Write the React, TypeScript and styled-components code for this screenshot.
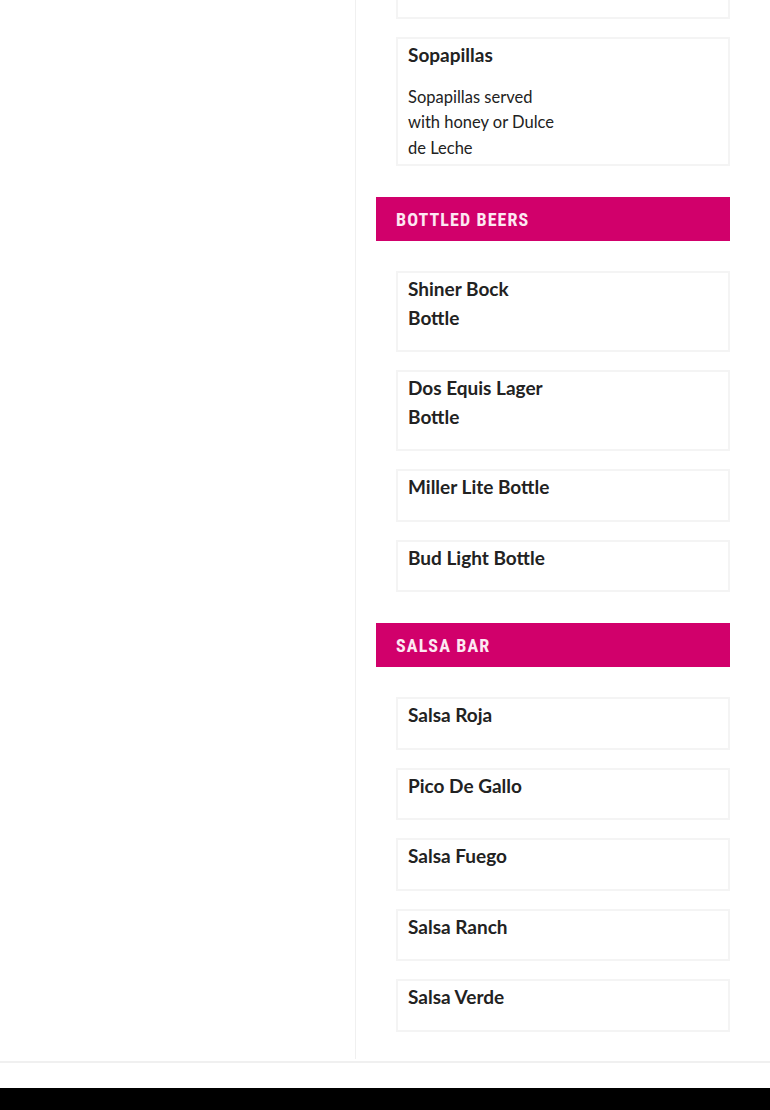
import React from "react";
import styled, { createGlobalStyle } from "styled-components";

const Global = createGlobalStyle`
  html, body { margin: 0; padding: 0; background: #fff; }
  body { font-family: "Source Sans Pro", Lato, "Noto Sans", sans-serif; color: #222; }
`;

const Page = styled.div`
  width: 770px;
  overflow: hidden;
`;

const Main = styled.div`
  display: flex;
  border-bottom: 2px solid #f0f0f0;
`;

const Sidebar = styled.aside`
  width: 355px;
  flex: none;
  border-right: 1px solid #f0f0f0;
  margin-bottom: 2px;
`;

const Content = styled.main`
  flex: 1;
  padding: 0 40px 29px 20px;
`;

const Section = styled.section`
  display: flex;
  flex-direction: column;
`;

const SectionHeader = styled.h2`
  margin: 31px 0 12px;
  height: 44px;
  box-sizing: border-box;
  background: #d1006b;
  color: #fde8f2;
  font-family: "Roboto Condensed", "DejaVu Sans Condensed", Roboto, sans-serif;
  font-stretch: condensed;
  font-weight: 700;
  font-size: 18px;
  letter-spacing: 1.1px;
  text-transform: uppercase;
  padding: 0 20px;
  display: flex;
  align-items: center;
`;

const Card = styled.div<{ $stub?: boolean }>`
  margin: 18px 0 0 20px;
  border: 2px solid #f4f4f4;
  padding: 2px 10px 3px;
  display: grid;
  grid-template-columns: 152px 1fr;
  ${(p) => (p.$stub ? "border-top: none; height: 12px; margin-top: 0;" : "")}
`;

const ItemInfo = styled.div`
  display: flex;
  flex-direction: column;
`;

const ItemName = styled.h3`
  margin: 0 0 15px;
  font-size: 19px;
  line-height: 28.5px;
  font-weight: 700;
  color: #222;
`;

const ItemDesc = styled.p`
  margin: 0;
  font-size: 16.5px;
  line-height: 25.5px;
  font-weight: 400;
  color: #222;
`;

const Footer = styled.footer`
  margin-top: 25px;
  height: 40px;
  background: #000;
`;

type Item = { name: string; desc?: string };

const sections: { title: string; items: Item[] }[] = [
  {
    title: "Bottled Beers",
    items: [
      { name: "Shiner Bock Bottle" },
      { name: "Dos Equis Lager Bottle" },
      { name: "Miller Lite Bottle" },
      { name: "Bud Light Bottle" },
    ],
  },
  {
    title: "Salsa Bar",
    items: [
      { name: "Salsa Roja" },
      { name: "Pico De Gallo" },
      { name: "Salsa Fuego" },
      { name: "Salsa Ranch" },
      { name: "Salsa Verde" },
    ],
  },
];

const MenuCard = ({ item }: { item: Item }) => (
  <Card>
    <ItemInfo>
      <ItemName>{item.name}</ItemName>
      {item.desc && <ItemDesc>{item.desc}</ItemDesc>}
    </ItemInfo>
    <div />
  </Card>
);

export default function App() {
  return (
    <Page>
      <Global />
      <Main>
        <Sidebar />
        <Content>
          <Section>
            <Card $stub />
            <MenuCard item={{ name: "Sopapillas", desc: "Sopapillas served with honey or Dulce de Leche" }} />
          </Section>
          {sections.map((s) => (
            <Section key={s.title}>
              <SectionHeader>{s.title}</SectionHeader>
              {s.items.map((it) => (
                <MenuCard key={it.name} item={it} />
              ))}
            </Section>
          ))}
        </Content>
      </Main>
      <Footer />
    </Page>
  );
}
